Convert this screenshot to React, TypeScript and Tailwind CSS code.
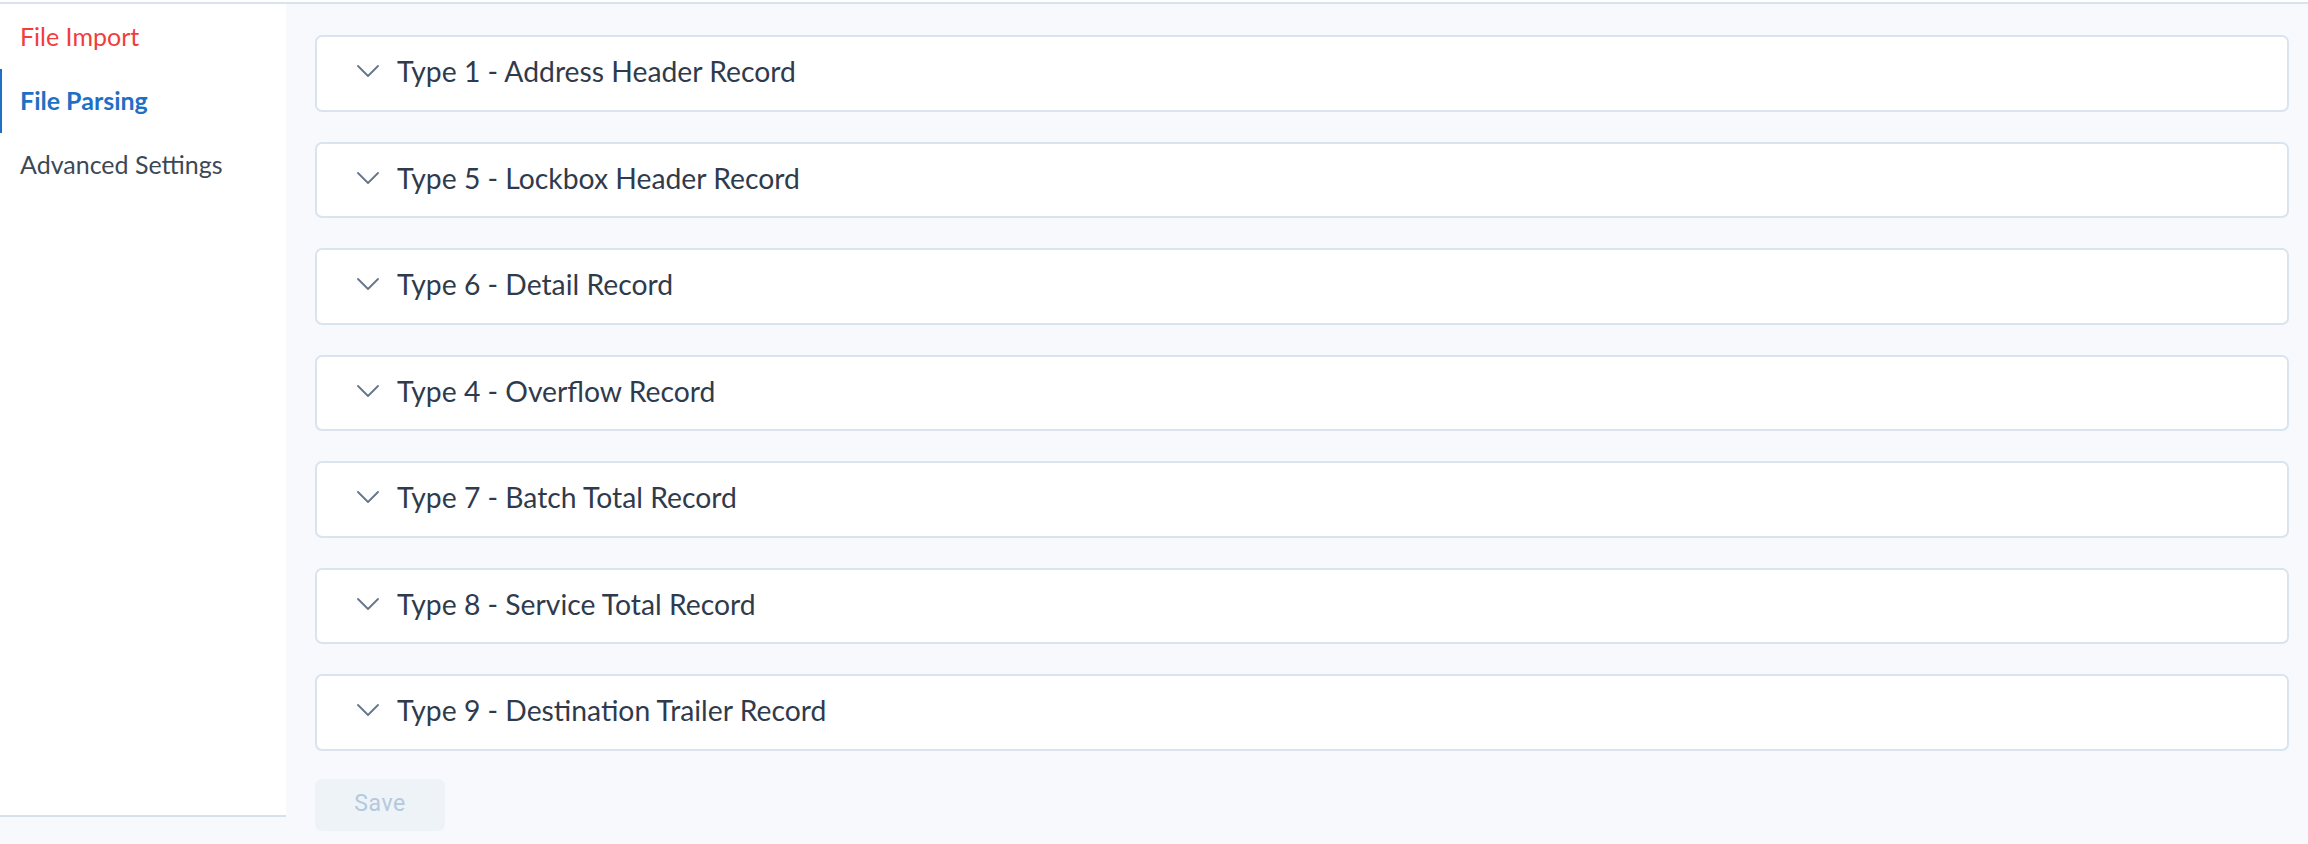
import { useState } from "react";

const NAV = [
  { id: "import", label: "File Import" },
  { id: "parsing", label: "File Parsing" },
  { id: "advanced", label: "Advanced Settings" },
];

const RECORDS = [
  "Type 1 - Address Header Record",
  "Type 5 - Lockbox Header Record",
  "Type 6 - Detail Record",
  "Type 4 - Overflow Record",
  "Type 7 - Batch Total Record",
  "Type 8 - Service Total Record",
  "Type 9 - Destination Trailer Record",
];

function Chevron({ open }: { open: boolean }) {
  return (
    <svg
      width="22"
      height="12"
      viewBox="0 0 22 12"
      fill="none"
      className={`shrink-0 transition-transform ${open ? "rotate-180" : ""}`}
    >
      <path d="M1 1l10 10L21 1" stroke="#66758a" strokeWidth="1.8" strokeLinecap="round" strokeLinejoin="round" />
    </svg>
  );
}

export default function App() {
  const [active] = useState("parsing");
  const [open, setOpen] = useState<number | null>(null);

  return (
    <div className="min-h-[844px] bg-[#f7f9fd]" style={{ fontFamily: "Lato, 'Noto Sans', sans-serif" }}>
      {/* header edge */}
      <div className="h-[2px] bg-white" />
      <div className="h-[2px] bg-[#d7e3ee]" />

      <div className="flex items-start">
        {/* Sidebar */}
        <aside className="w-[286px] h-[813px] shrink-0 bg-white border-b-2 border-[#d5e1ec] pt-[1px]">
          {NAV.map((n) => (
            <div
              key={n.id}
              className={`h-[64px] flex items-center text-[25px] ${
                n.id === active
                  ? "border-l-2 border-[#1f6fc5] pl-[18px] font-bold text-[#1f6fc5]"
                  : n.id === "import"
                  ? "pl-[20px] text-[#f23d3d]"
                  : "pl-[20px] text-[#3d4856]"
              }`}
            >
              {n.label}
            </div>
          ))}
        </aside>

        {/* Main */}
        <main className="flex-1 pl-[29px] pr-[19px] pt-[31px]">
          <div className="flex flex-col gap-[30px]">
            {RECORDS.map((r, i) => (
              <div key={r} className="rounded-[7px] border-2 border-[#d9e4ef] bg-white">
                <button
                  onClick={() => setOpen(open === i ? null : i)}
                  className="h-[72.5px] w-full flex items-center gap-[18px] pl-[40px] pb-[4px] text-left"
                >
                  <Chevron open={open === i} />
                  <span className="text-[28.3px] text-[#2f3b4c]">{r}</span>
                </button>
              </div>
            ))}
          </div>

          <button
            disabled
            className="mt-[28px] h-[52px] w-[130px] rounded-[7px] bg-[#eef3f8] text-[23px] text-[#b5c8dd] tracking-wide"
            style={{ fontFamily: "Roboto, sans-serif" }}
          >
            Save
          </button>
        </main>
      </div>
    </div>
  );
}
